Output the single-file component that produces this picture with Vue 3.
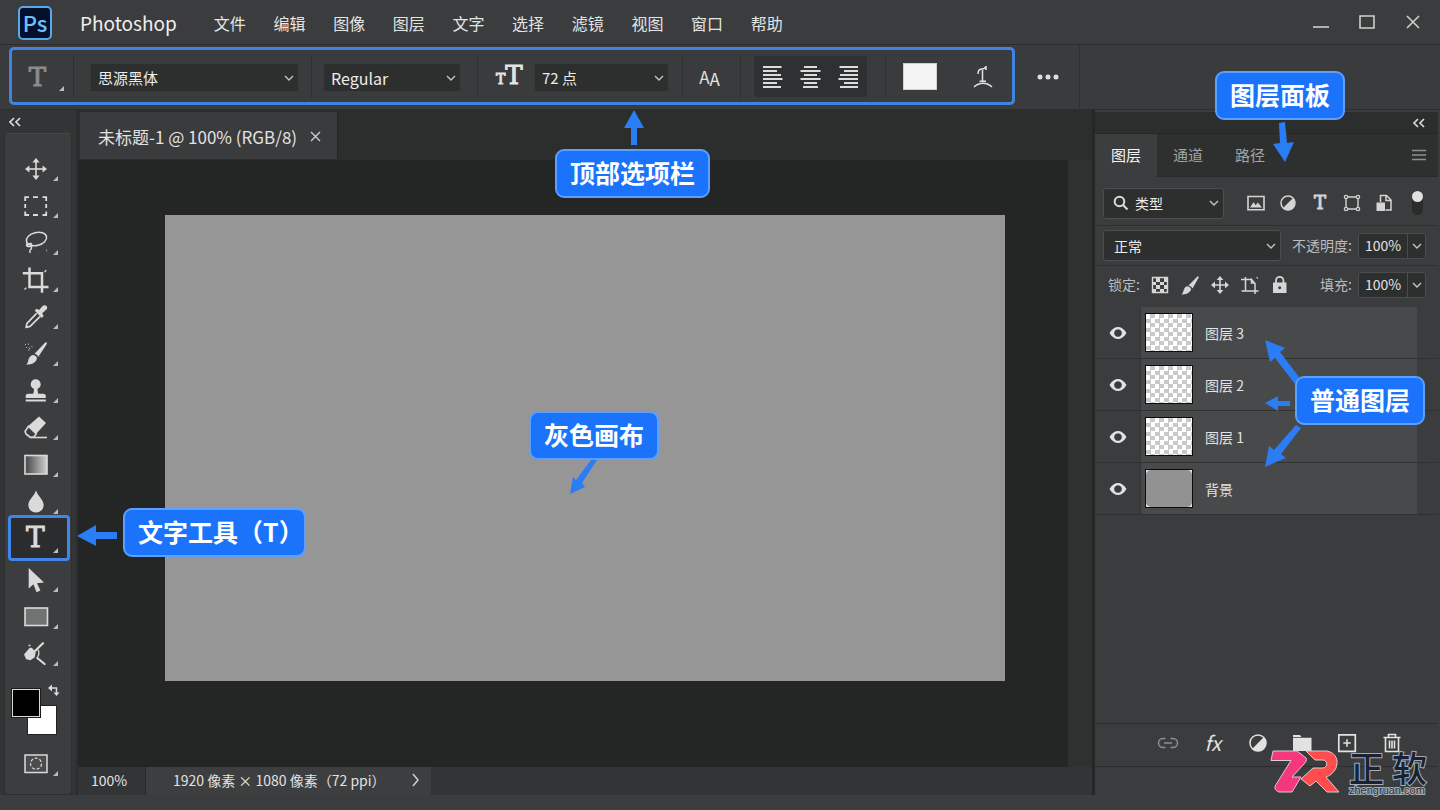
<script setup>
import { ref } from 'vue'

const menus = ['文件', '编辑', '图像', '图层', '文字', '选择', '滤镜', '视图', '窗口', '帮助']

const tools = [
  { id: 'move', label: '移动工具', body: '<g fill="currentColor"><path d="M13.2 5h1.6v18h-1.6z"/><path d="M5 13.2h18v1.6H5z"/><path d="M14 3l3.6 4.4h-7.2zM14 25l3.6-4.4h-7.2zM3 14l4.4-3.6v7.2zM25 14l-4.4-3.6v7.2z"/></g>' },
  { id: 'marquee', label: '矩形选框工具', body: '<path d="M3.2 9V5.2H7M11 5.2h5M20.500 5.200h3.700V9M24.200 12v4M24.200 19.500v3.500H20.500M16 23h-5M7 23H3.200V19.500M3.200 16v-4" fill="none" stroke="currentColor" stroke-width="1.800"/>' },
  { id: 'lasso', label: '套索工具', body: '<g fill="none" stroke="currentColor" stroke-width="1.500"><ellipse cx="14.500" cy="10" rx="10.300" ry="6.500" transform="rotate(-14 14.500 10)"/><path d="M5.500 14c-1.800 1.800-1 3.600 1 3.600s4-.6 3.200-2.400-3.700 0-4.700 1.600M9.500 17.500c.5 2-.7 3-1.300 3.500-1.500 1.300.5 1.500-.2 3"/></g><path d="M24.200 20.500h.9v2h-.9z" fill="currentColor" opacity=".7"/>' },
  { id: 'crop', label: '裁剪工具', body: '<path d="M7.500 1.500V21h19M.8 7.300H20v19.400" fill="none" stroke="currentColor" stroke-width="2.500"/><path d="M22.500 6l1.800-1.800M2.500 23.500L4.300 21.700" stroke="currentColor" stroke-width="1.300"/>' },
  { id: 'eyedropper', label: '吸管工具', body: '<path d="M14.600 10.400L5 20.300l-.9 4.100 4-1 9.800-9.800" fill="none" stroke="currentColor" stroke-width="1.700" stroke-linejoin="round"/><path d="M12.700 7.600l2-1.800 2.400 1.300 3.500-4c1.300-1.300 2.900-1.100 3.900-.2s1 2.500-.3 3.800L20.200 10.200l1.400 2.800-2 2z" fill="currentColor"/>' },
  { id: 'brush', label: '画笔工具', body: '<g fill="currentColor"><path d="M12.600 13.700L22.500 3.200c1-.9 1.800-1 2.200-.7s.3 1.100-.4 2.200L16.200 16.900c-.5-1.600-1.800-2.900-3.600-3.200z"/><path d="M11.400 14.900c2 .2 3.600 1.800 3.500 3.500-.5 3.600-4.800 6.300-10.700 6.200 2.200-1.700 1.700-3.500 2.400-5.600.8-2.400 2.700-4 4.800-4.100z"/></g><path d="M3 4.500h1M4 7l1 1M6.500 3.500v1.200M7 7.500l1 1.500M9.500 6l.8 1.200M6 10h1.500" stroke="currentColor" opacity=".75"/>' },
  { id: 'stamp', label: '仿制图章工具', body: '<g fill="currentColor"><circle cx="13.700" cy="7.300" r="5"/><path d="M11.800 11h3.900c-.3 2.200 0 4.200.6 5.700h5.200c1.300 0 2.300 1 2.300 2.200v2H3.700v-2c0-1.200 1-2.200 2.300-2.200h5.200c.6-1.500.9-3.500.6-5.700zM3.700 22.500h20.100v2H3.700z"/></g>' },
  { id: 'eraser', label: '橡皮擦工具', body: '<path d="M17 2.500l7 6.500-10 11-8.300-7.500z" fill="currentColor"/><path d="M6.500 12.200L3 17.500l1 2.500 4.500 3.500 3.200-.5 2.600-3z" fill="none" stroke="currentColor" stroke-width="1.600" stroke-linejoin="round"/><path d="M8.500 23.500h16.500" stroke="currentColor" stroke-width="1.600"/>' },
  { id: 'gradient', label: '渐变工具', body: '<defs><linearGradient id="fade"><stop offset="0" stop-color="#444"/><stop offset="1" stop-color="#d0d0d0"/></linearGradient></defs><rect x="3" y="4.500" width="22" height="18.500" fill="url(#fade)" stroke="currentColor" stroke-width="1.600"/>' },
  { id: 'blur', label: '模糊工具', body: '<path d="M14 2.500c1.500 5 7.700 9.500 7.700 14.600A7.600 7.600 0 0 1 14 24.500a7.600 7.600 0 0 1-7.700-7.400C6.300 12 12.500 7.500 14 2.500z" fill="currentColor"/>' },
  { id: 'type', label: '文字工具', active: true, glyph: 'T' },
  { id: 'select', label: '路径选择工具', body: '<path d="M6.700 2v20.500l4.800-4.200 3 7.900 3.900-1.600-3.400-7.400 7-.7z" fill="currentColor"/>' },
  { id: 'shape', label: '矩形工具', body: '<rect x="3" y="5" width="22.500" height="17.500" fill="#717272" stroke="currentColor" stroke-width="1.600"/>' },
  { id: 'pen', label: '钢笔工具', body: '<path d="M7.500 8c2-.5 3 .3 3.800 1.500l2.400 3.300-1 4.500-4.300 3-4.200-1L2 14.500z" fill="currentColor"/><path d="M12.500 11.500L21 3.200M15.300 18l7.300 6" stroke="currentColor" stroke-width="2.200" stroke-linecap="round" fill="none"/><path d="M15.800 9.500c1.600 2.300 1.600 4.800-.2 7.500M6.500 5.500h2" stroke="currentColor" stroke-width="1.300" fill="none"/>' },
]

const aligns = [
  { label: '左对齐文本', d: 'M1 1h18.500M1 5h14M1 9h18M1 13h19.500M1 17h14M1 21h18' },
  { label: '居中对齐文本', d: 'M4 1h13M.5 5h20M4 9h13M.5 13h20M4 17h13M3 21h15' },
  { label: '右对齐文本', d: 'M1.500 1H20M6 5h14M2 9h18M.5 13H20M6 17h14M2 21h18' },
]

const lockIcons = [
  { label: '锁定透明像素', body: '<path d="M2.500 2.500h15v15h-15z" fill="none" stroke="currentColor" stroke-width="1.400"/><path d="M6 3h4v4H6zM14 3h3v4h-3zM3 7h3v3H3zM10 7h4v3h-4zM6 10h4v4H6zM14 10h3v4h-3zM3 14h3v3H3zM10 14h4v3h-4z" fill="currentColor"/>' },
  { label: '锁定图像像素', body: '<path d="M8.500 10.500L17.700 1.200l1.300.9-6.500 11.300c-.8-1.500-2.400-2.400-4-2.900zM7.500 11.300c1.800.4 3.300 1.500 3.600 3-1 3.600-4.900 5.400-9.600 5.100 1.800-1.600 1.600-3 2.500-5.100.7-1.800 1.900-2.900 3.500-3z" fill="currentColor"/>' },
  { label: '锁定位置', body: '<path d="M10 3v14M3 10h14" stroke="currentColor" stroke-width="1.600"/><path d="M10 1l3.400 4H6.600zM10 19l3.400-4H6.600zM1 10l4-3.400v6.800zM19 10l-4-3.400v6.800z" fill="currentColor"/>' },
  { label: '防止自动嵌套', body: '<path d="M5.500 2v14H18.500M1 4.500h11M15 19V8.500L11.500 4.500V8H15M1.500 16H5" fill="none" stroke="currentColor" stroke-width="1.500"/><path d="M16 2.500h1.500V4" fill="none" stroke="currentColor" opacity=".7"/>' },
  { label: '锁定全部', body: '<path d="M6 9V5.500a3.700 3.700 0 0 1 7.400 0V9" fill="none" stroke="currentColor" stroke-width="1.800"/><path fill-rule="evenodd" d="M3 7.500h13.500V18H3zM9.700 11.300a1.500 1.500 0 1 0 .01 0z" fill="currentColor"/>' },
]

const filterIcons = [
  { label: '像素图层', body: '<path d="M2 3.500h16v13.300H2z" fill="none" stroke="currentColor" stroke-width="1.600"/><path d="M4 14.500l3.500-5.300 2.300 3 2-2.700 4.200 5z" fill="currentColor"/>' },
  { label: '调整图层', body: '<circle cx="10" cy="10" r="7" fill="none" stroke="currentColor" stroke-width="1.500"/><path d="M15 5a7 7 0 0 1-10 10z" fill="currentColor"/>' },
  { label: '文字图层', glyph: 'T' },
  { label: '形状图层', body: '<path d="M4 4h12v12H4z" fill="none" stroke="currentColor" stroke-width="1.400"/><g fill="#3c3d3e" stroke="currentColor" stroke-width="1.200"><circle cx="4" cy="4" r="1.700"/><circle cx="16" cy="4" r="1.700"/><circle cx="4" cy="16" r="1.700"/><circle cx="16" cy="16" r="1.700"/></g>' },
  { label: '智能对象', body: '<path d="M6.500 9V2.500h6L17 7v10h-5.500M12 2.500V7.500h5" fill="none" stroke="currentColor" stroke-width="1.500"/><path d="M2.500 9.500h8.500v8.500H2.500z" fill="currentColor"/>' },
]

const footIcons = [
  { label: '链接图层', dim: true, body: '<path d="M9.500 7.500H7a4.500 4.500 0 0 0 0 9h2.500M14.500 7.500H17a4.500 4.500 0 0 1 0 9h-2.500M8 12h8" fill="none" stroke="currentColor" stroke-width="1.500"/>' },
  { label: '图层样式', fx: true },
  { label: '新建调整图层', body: '<circle cx="12" cy="12" r="8" fill="none" stroke="currentColor" stroke-width="1.500"/><path d="M17.700 6.300a8 8 0 0 1-11.400 11.400z" fill="currentColor"/>' },
  { label: '新建组', body: '<path d="M3 4h7l1.500 2H3zM3 6.800h18.500V20H3z" fill="currentColor"/>' },
  { label: '新建图层', body: '<path d="M3.800 3.800h16.500v16.500H3.800z" fill="none" stroke="currentColor" stroke-width="1.700"/><path d="M12 8.300v7.500M8.300 12h7.500" stroke="currentColor" stroke-width="1.500"/>' },
  { label: '删除图层', body: '<path d="M3.500 6.500h17M8.500 6V3.500h7V6M5.500 6.500V20.500h13V6.500M9.500 9.500v8M12 9.500v8M14.500 9.500v8" fill="none" stroke="currentColor" stroke-width="1.600"/>' },
]

const layers = ref([
  { name: '图层 3' },
  { name: '图层 2' },
  { name: '图层 1' },
  { name: '背景', background: true },
])

const opacity = ref('100%')
const fill = ref('100%')
const filterOff = ref(false)
</script>

<template>
  <div class="app">
    <header class="titlebar">
      <span class="logo">Ps</span>
      <span class="brand">Photoshop</span>
      <nav class="menus">
        <a v-for="m in menus" :key="m" href="#">{{ m }}</a>
      </nav>
      <div class="window-buttons">
        <button aria-label="最小化"><svg width="16" height="16"><path d="M0 13h16" /></svg></button>
        <button aria-label="最大化"><svg width="16" height="16"><path d="M1 2h14v12H1z" /></svg></button>
        <button aria-label="关闭"><svg width="16" height="16"><path d="M2 2l12 12M14 2L2 14" /></svg></button>
      </div>
    </header>

    <div class="options">
      <div class="options-frame">
        <div class="group first">
          <button class="preset slab" aria-label="工具预设">T</button>
        </div>
        <div class="group family">
          <span class="picker">
            <select aria-label="字体"><option>思源黑体</option></select>
            <svg class="chev" width="10" height="6"><path d="M1 1l4 4 4-4" /></svg>
          </span>
        </div>
        <div class="group weight">
          <span class="picker">
            <select aria-label="字形"><option>Regular</option></select>
            <svg class="chev" width="10" height="6"><path d="M1 1l4 4 4-4" /></svg>
          </span>
        </div>
        <div class="group size">
          <label class="size-label slab" for="font-size" aria-label="字号"><small>T</small>T</label>
          <span class="picker">
            <select id="font-size"><option>72 点</option></select>
            <svg class="chev" width="10" height="6"><path d="M1 1l4 4 4-4" /></svg>
          </span>
        </div>
        <div class="group alias">
          <button class="antialias" aria-label="消除锯齿"><span>A</span><span class="low">A</span></button>
        </div>
        <div class="group paragraph">
          <div class="aligns">
            <button v-for="a in aligns" :key="a.label" :aria-label="a.label">
              <svg width="21" height="22"><path :d="a.d" /></svg>
            </button>
          </div>
        </div>
        <div class="group colour">
          <button class="text-colour" aria-label="文本颜色"></button>
          <button class="warp" aria-label="变形文字">
            <svg width="20" height="24" fill="none" stroke="currentColor">
              <path d="M1 22c5-5 13-5 18 0" stroke-width="1.500" />
              <path d="M5 9c0-4 2-5 4-5s3-.5 4-2.500M13 1v4M9.500 5v11M6.500 16.300h6.500" stroke-width="1.500" />
            </svg>
          </button>
        </div>
      </div>
      <button class="more" aria-label="更多选项"><svg width="22" height="6"><circle cx="3" cy="3" r="2.500" /><circle cx="11" cy="3" r="2.500" /><circle cx="19" cy="3" r="2.500" /></svg></button>
    </div>

    <div class="main">
      <aside class="toolbox">
        <button class="collapse" aria-label="折叠工具栏"><svg width="12" height="10"><path d="M5 1L1 5l4 4M11 1L7 5l4 4" /></svg></button>
        <div class="tools">
          <button v-for="t in tools" :key="t.id" class="tool" :class="{ active: t.active }" :aria-label="t.label">
            <span v-if="t.glyph" class="glyph slab">{{ t.glyph }}</span>
            <svg v-else width="28" height="28" viewBox="0 0 28 28" v-html="t.body"></svg>
          </button>
          <div class="swatches">
            <button class="back" aria-label="背景色"></button>
            <button class="front" aria-label="前景色"></button>
            <button class="swap" aria-label="切换颜色"><svg width="12" height="12"><path d="M2 4h6.500v6" fill="none" stroke="currentColor" stroke-width="1.500" /><path d="M0 4l4-3.500v7zM8.500 12L5.500 8.500h6z" fill="currentColor" /></svg></button>
          </div>
          <button class="tool mask" aria-label="快速蒙版">
            <svg width="28" height="28" viewBox="0 0 28 28"><rect x="3" y="5" width="22" height="17.500" fill="#4b4c4d" stroke="currentColor" stroke-width="1.500" /><circle cx="14" cy="13.700" r="5.500" fill="none" stroke="currentColor" stroke-width="1.200" stroke-dasharray="3 1.800" /></svg>
          </button>
        </div>
      </aside>

      <main class="workspace">
        <div class="tabbar">
          <div class="doc-tab">
            <span>未标题-1 @ 100% (RGB/8)</span>
            <button aria-label="关闭文档"><svg width="11" height="11"><path d="M1 1l9 9M10 1L1 10" /></svg></button>
          </div>
        </div>
        <div class="viewport">
          <div class="stage">
            <div class="canvas">
              <div class="callout on-canvas">
                <svg class="arrow" width="1" height="1"><path d="M62 49h6L53 72l3 4-15 7 3-17 3 3z" /></svg>
                <strong>灰色画布</strong>
              </div>
            </div>
          </div>
          <div class="scroll"></div>
        </div>
        <footer class="status">
          <span class="zoom">100%</span>
          <span class="info">1920 像素 × 1080 像素（72 ppi）<button aria-label="更多信息"><svg width="8" height="14"><path d="M1 1l5 6-5 6" /></svg></button></span>
        </footer>
      </main>

      <aside class="panel">
        <div class="panel-top">
          <button aria-label="折叠面板"><svg width="14" height="10"><path d="M6 1L2 5l4 4M12 1L8 5l4 4" /></svg></button>
        </div>
        <div class="panel-tabs">
          <button class="current">图层</button>
          <button>通道</button>
          <button>路径</button>
          <button class="panel-menu" aria-label="面板菜单"><svg width="14" height="12"><path d="M0 1.500h14M0 6h14M0 10.500h14" /></svg></button>
        </div>
        <div class="row filter">
          <span class="picker boxed">
            <svg class="search" width="16" height="16"><circle cx="6.500" cy="6.500" r="4.800" /><path d="M10 10l4.500 4.500" /></svg>
            <select aria-label="筛选类型"><option>类型</option></select>
            <svg class="chev" width="10" height="6"><path d="M1 1l4 4 4-4" /></svg>
          </span>
          <div class="filter-icons">
            <button v-for="f in filterIcons" :key="f.label" :aria-label="f.label">
              <span v-if="f.glyph" class="glyph slab">{{ f.glyph }}</span>
              <svg v-else width="20" height="20" viewBox="0 0 20 20" v-html="f.body"></svg>
            </button>
          </div>
          <input v-model="filterOff" class="switch" type="checkbox" aria-label="打开或关闭图层过滤" />
        </div>
        <div class="row blend">
          <span class="picker boxed">
            <select aria-label="混合模式"><option>正常</option></select>
            <svg class="chev" width="10" height="6"><path d="M1 1l4 4 4-4" /></svg>
          </span>
          <label for="opacity">不透明度:</label>
          <span class="amount">
            <input id="opacity" v-model="opacity" type="text" />
            <button aria-label="调整不透明度"><svg class="mark" width="10" height="6"><path d="M1 1l4 4 4-4" /></svg></button>
          </span>
        </div>
        <div class="row lock">
          <span class="lock-title">锁定:</span>
          <div class="lock-icons">
            <button v-for="l in lockIcons" :key="l.label" :aria-label="l.label">
              <svg width="20" height="20" viewBox="0 0 20 20" v-html="l.body"></svg>
            </button>
          </div>
          <label for="fill">填充:</label>
          <span class="amount">
            <input id="fill" v-model="fill" type="text" />
            <button aria-label="调整填充"><svg class="mark" width="10" height="6"><path d="M1 1l4 4 4-4" /></svg></button>
          </span>
        </div>
        <ul class="layers">
          <li v-for="l in layers" :key="l.name">
            <button class="eye" :aria-label="'显示或隐藏 ' + l.name">
              <svg width="18" height="14"><path fill-rule="evenodd" d="M0.500 7C3 2.800 6 1 9 1s6 1.800 8.500 6C15 11.200 12 13 9 13S3 11.200.5 7zM9 3.200a3.800 3.800 0 1 0 .01 0z" /></svg>
            </button>
            <div class="layer-body">
              <span class="thumb" :class="{ solid: l.background }"></span>
              <span>{{ l.name }}</span>
            </div>
          </li>
        </ul>
        <div class="panel-foot">
          <button v-for="f in footIcons" :key="f.label" :class="{ dim: f.dim }" :aria-label="f.label">
            <em v-if="f.fx">fx</em>
            <svg v-else width="24" height="24" viewBox="0 0 24 24" v-html="f.body"></svg>
          </button>
        </div>
        <div class="panel-base"></div>
      </aside>
    </div>

    <div class="callout on-options">
      <svg class="arrow" width="1" height="1"><path d="M79-39l10 18h-7v17h-6v-17h-7z" /></svg>
      <strong>顶部选项栏</strong>
    </div>
    <div class="callout on-panel">
      <svg class="arrow" width="1" height="1"><path d="M64 52l6-1 2 21 7-1-9 20-12-18 7-1z" /></svg>
      <strong>图层面板</strong>
    </div>
    <div class="callout on-type">
      <svg class="arrow" width="1" height="1"><path d="M-46 28l19-11v7h21v7h-21v7z" /></svg>
      <strong>文字工具（T<span class="close">）</span></strong>
    </div>
    <div class="callout on-layers">
      <svg class="arrow" width="1" height="1">
        <path d="M-30-36l20 8-5 4L4 1l-4 7-20-26-5 4z" />
        <path d="M-30 27l13-7v5h12v5h-12v5z" />
        <path d="M-30 91l4-21 5 4L1 49l5 3-20 26 5 4z" />
      </svg>
      <strong>普通图层</strong>
    </div>

    <div class="watermark">
      <svg width="70" height="44" viewBox="0 0 70 44" stroke="#d9cdd2" stroke-width="1" stroke-linejoin="round">
        <path d="M3 1h24l9 7c1 2 0 4-2 6L22 27h9l-9 15H9c-5-2-5-5-2-9l14-22.500H1z" fill="#f5377e" />
        <path d="M36 1h21c9 2 12 9 9 17-3 6-7 8-10 9l13 15H57L46 31l-6 5-9-7 12-11h10c5-1 5-7 0-8h-8z" fill="#ff4c4c" />
      </svg>
      <div class="wordmark">
        <div class="hanzi"><span>正</span><span>软</span></div>
        <span class="site">zhengruan.com</span>
      </div>
    </div>
  </div>
</template>

<style>
body {
  background: #3b3c3d;
}
</style>

<style scoped>
* {
  box-sizing: border-box;
}

.app {
  position: relative;
  display: flex;
  flex-direction: column;
  min-height: 100vh;
  padding-bottom: 15px;
  overflow: hidden;
  background: #3b3c3d;
  color: #e2e2e2;
  font: 14px/20px "Noto Sans CJK SC", "Noto Sans", sans-serif;
}

button,
select,
input {
  margin: 0;
  padding: 0;
  border: 0;
  background: none;
  color: inherit;
  font: inherit;
}

button {
  display: grid;
  place-items: center;
}

svg {
  display: block;
}

.slab {
  font-family: "DejaVu Serif", serif;
}

/* title bar */
.titlebar {
  display: flex;
  align-items: center;
  height: 45px;
  padding: 2px 19px 0 18px;
  border-bottom: 1px solid #2a2b2b;
}

.logo {
  width: 34px;
  height: 34px;
  border: 2px solid #55a9ec;
  border-radius: 5px;
  background: #041029;
  color: #6cc0ff;
  font-size: 22px;
  font-weight: 500;
  line-height: 28px;
  text-align: center;
}

.brand {
  margin-left: 28px;
  color: #efefef;
  font-size: 19px;
}

.menus {
  display: flex;
  justify-content: space-between;
  width: 569px;
  margin-left: 37px;
}

.menus a {
  color: #e4e4e4;
  font-size: 16px;
  text-decoration: none;
}

.window-buttons {
  display: flex;
  gap: 30px;
  margin-left: auto;
  padding-bottom: 2px;
}

.window-buttons path {
  fill: none;
  stroke: #cfcfcf;
  stroke-width: 1.6;
}

/* options bar */
.options {
  display: flex;
  align-items: center;
  height: 65px;
  padding-left: 9px;
  border-bottom: 1px solid #2c2d2d;
  background: #3a3b3c;
}

.options-frame {
  display: flex;
  align-items: center;
  height: 58px;
  margin-bottom: 3px;
  padding-top: 2px;
  border: 3px solid #3f83e2;
  border-radius: 5px;
}

.group {
  display: flex;
  align-items: center;
  height: 42px;
  border-left: 1px solid #2f3030;
}

.first {
  justify-content: center;
  width: 61px;
  border-left: 0;
}

.preset {
  position: relative;
  width: 42px;
  height: 28px;
  padding-right: 10px;
  color: #8b8c8c;
  font-size: 26px;
  -webkit-text-stroke: 1px;
}

.preset::after,
.tool::after {
  content: "";
  position: absolute;
  right: 2px;
  bottom: 2px;
  border-left: 5px solid transparent;
  border-bottom: 5px solid #bdbdbd;
}

.preset::after {
  right: 0;
  bottom: 0;
}

.family {
  padding: 0 12px 0 16px;
}

.family .picker {
  width: 209px;
}

.weight {
  padding: 0 16px 0 11px;
}

.weight .picker {
  width: 138px;
}

.size {
  padding: 0 13px 0 18px;
}

.size .picker {
  width: 135px;
}

.size-label {
  display: flex;
  align-items: baseline;
  width: 38px;
  font-size: 26px;
  -webkit-text-stroke: 1px;
}

.size-label small {
  font-size: 14px;
}

.picker {
  position: relative;
  display: flex;
  align-items: center;
  height: 29px;
  border: 1px solid #383939;
  border-radius: 2px;
  background: #2d2e2e;
}

.group .picker {
  margin-top: 2px;
}

.picker select {
  flex: 1;
  width: 100%;
  height: 100%;
  padding: 0 24px 0 7px;
  appearance: none;
  color: #ececec;
  font-size: 16px;
  line-height: 26px;
}

.family select,
.size select {
  font-size: 15px;
}

.chev {
  position: absolute;
  right: 4px;
  pointer-events: none;
}

.chev path,
.mark path {
  fill: none;
  stroke: #c4c4c4;
  stroke-width: 1.4;
}

.alias {
  justify-content: center;
  width: 58px;
  padding-right: 4px;
}

.antialias {
  display: flex;
  font-size: 17px;
}

.antialias .low {
  padding-top: 5px;
}

.paragraph {
  padding: 0 18px 0 13px;
}

.aligns {
  display: flex;
  justify-content: space-around;
  width: 113px;
  height: 41px;
  border-radius: 3px;
  background: #2f3031;
}

.aligns path {
  stroke: #dcdcdc;
  stroke-width: 1.8;
}

.colour {
  gap: 36px;
  padding: 0 19px 0 17px;
}

.text-colour {
  width: 34px;
  height: 27px;
  border: 1px solid #d0d0d0;
  background: #f3f3f3;
}

.more {
  height: 62px;
  padding: 0 20px 0 22px;
  border-right: 1px solid #2d2e2e;
}

.more circle {
  fill: #dedede;
}

/* main area */
.main {
  display: flex;
  flex: 1;
  min-height: 0;
}

.toolbox {
  display: flex;
  flex-direction: column;
  width: 78px;
  padding-left: 4px;
  border-right: 2px solid #2b2c2c;
  background: #333435;
}

.collapse {
  width: 22px;
  height: 23px;
}

.collapse path,
.panel-top path {
  fill: none;
  stroke: #d8d8d8;
  stroke-width: 1.7;
}

.tools {
  display: flex;
  flex: 1;
  flex-direction: column;
  width: 68px;
  padding: 16px 2px 0 4px;
  border: 1px solid #2e2f2f;
  border-top-color: #464748;
  border-radius: 4px;
  background: #3c3d3e;
  color: #dadada;
}

.tool {
  position: relative;
  justify-content: start;
  width: 62px;
  height: 37px;
  padding-left: 13px;
}

.tool::after {
  right: 13px;
  bottom: 6px;
}

.tool.active {
  height: 46px;
  margin: -5px 0 0 -1px;
  padding-left: 15px;
  border: 3px solid #3f86e8;
  border-radius: 4px;
  background: #2b2c2d;
}

.tool.active::after {
  right: 9px;
  bottom: 5px;
}

.tool .glyph {
  font-size: 28px;
  line-height: 36px;
  -webkit-text-stroke: 1px;
}

.swatches {
  position: relative;
  height: 52px;
  margin-top: 12px;
}

.swatches button {
  position: absolute;
}

.front {
  top: 5px;
  left: 3px;
  width: 28px;
  height: 28px;
  border: 1px solid #d9d9d9;
  outline: 1px solid #1c1c1c;
  background: #000;
}

.swatches .back {
  top: 21px;
  left: 18px;
  width: 30px;
  height: 30px;
  border: 1px solid #222;
  background: #fff;
}

.swap {
  top: 0;
  left: 39px;
}

.mask {
  margin-top: 9px;
}

/* document */
.workspace {
  display: flex;
  flex: 1;
  flex-direction: column;
  min-width: 0;
  background: #2b2c2c;
}

.tabbar {
  display: flex;
  height: 50px;
  padding: 2px 0 0 2px;
  border-bottom: 1px solid #2b2c2c;
  background: #2c2d2d;
}

.doc-tab {
  display: flex;
  align-items: center;
  gap: 13px;
  padding: 2px 16px 0 18px;
  border-right: 1px solid #252626;
  background: #3a3b3c;
  font-size: 17px;
}

.doc-tab path {
  fill: none;
  stroke: #cdcdcd;
  stroke-width: 1.4;
}

.viewport {
  display: flex;
  flex: 1;
}

.stage {
  display: flex;
  flex: 1;
  padding: 55px 63px 86px 87px;
  background: #242525;
}

.canvas {
  position: relative;
  flex: 1;
  background: #969696;
}

.scroll {
  width: 24px;
  background: #2f3030;
}

.status {
  display: flex;
  height: 28px;
  background: #333435;
  line-height: 26px;
}

.zoom {
  width: 68px;
  padding-left: 13px;
  border-right: 1px solid #2a2b2b;
}

.info {
  display: flex;
  align-items: center;
  gap: 26px;
  padding: 0 11px 2px 27px;
  background: #3d3e3f;
}

.info path {
  fill: none;
  stroke: #cfcfcf;
  stroke-width: 1.5;
}

/* layers panel */
.panel {
  display: flex;
  flex-direction: column;
  width: 348px;
  padding: 2px 2px 0 0;
  border-left: 3px solid #252626;
  background: #3b3c3d;
}

.panel-top {
  display: flex;
  justify-content: flex-end;
  height: 21px;
  padding-right: 12px;
  background: #2c2d2d;
}

.panel-tabs {
  display: flex;
  height: 44px;
  border-top: 1px solid #252626;
  border-bottom: 1px solid #292a2a;
  background: #2e2f2f;
  color: #a3a3a3;
}

.panel-tabs button {
  width: 62px;
  font-size: 15px;
}

.panel-tabs .current {
  height: 44px;
  padding-bottom: 2px;
  background: #3c3d3e;
  color: #f4f4f4;
}

.panel-tabs .panel-menu {
  width: 38px;
  margin-left: auto;
}

.panel-menu path {
  stroke: #8f8f8f;
  stroke-width: 1.5;
}

.row {
  display: flex;
  align-items: center;
  height: 40px;
  padding: 0 12px 0 8px;
  border-bottom: 1px solid #2f3030;
}

.row.filter {
  height: 49px;
  padding: 4px 15px 0 8px;
}

.row.lock {
  height: 41px;
  padding: 0 12px 4px 13px;
  border-bottom: 0;
}

.boxed {
  height: 31px;
  border-color: #4d4e4f;
  border-radius: 3px;
}

.boxed select {
  padding-left: 10px;
  font-size: 14px;
}

.filter .boxed {
  width: 121px;
  padding-left: 9px;
}

.filter .boxed select {
  padding-left: 6px;
}

.search {
  flex: none;
  fill: none;
  stroke: #dcdcdc;
  stroke-width: 2;
}

.filter-icons {
  display: flex;
  gap: 12px;
  margin-left: 22px;
  color: #d4d4d4;
}

.filter-icons button {
  width: 20px;
  height: 20px;
}

.filter-icons .glyph {
  font-size: 18px;
  -webkit-text-stroke: 1px;
}

.switch {
  width: 11px;
  height: 24px;
  margin-left: auto;
  border-radius: 6px;
  appearance: none;
  background: #2a2b2b;
}

.switch::before {
  content: "";
  display: block;
  width: 11px;
  height: 11px;
  border-radius: 50%;
  background: #e0e0e0;
}

.blend .boxed {
  flex: 1;
  margin-right: 11px;
}

.row label,
.lock-title {
  padding-bottom: 2px;
  color: #bdbdbd;
}

.amount {
  display: flex;
  width: 68px;
  height: 26px;
  margin-left: 6px;
  border: 1px solid #4b4c4d;
  border-radius: 2px;
  background: #2d2e2e;
}

.amount input {
  width: 48px;
  padding-bottom: 2px;
  text-align: center;
}

.amount button {
  flex: 1;
  border-left: 1px solid #4b4c4d;
}

.lock-icons {
  display: flex;
  gap: 10px;
  margin: 0 auto 0 10px;
  color: #d6d6d6;
}

.layers {
  flex: 1;
  margin: 0;
  padding: 0;
  list-style: none;
}

.layers li {
  display: flex;
  height: 52px;
  border-bottom: 1px solid #303131;
}

.eye {
  width: 45px;
}

.eye path {
  fill: #e2e2e2;
}

.layer-body {
  display: flex;
  flex: 1;
  align-items: center;
  gap: 12px;
  margin-right: 21px;
  padding-left: 4px;
  border-left: 1px solid #343536;
  background: #48494a;
}

.thumb {
  width: 48px;
  height: 39px;
  border: 1px solid #0c0c0c;
  background: repeating-conic-gradient(#c9c9c9 0 25%, #fff 0 50%) 0 0 / 9px 9px;
}

.thumb.solid {
  background: #e6e6e6;
}

.thumb.solid::before {
  content: "";
  display: block;
  height: 100%;
  border-radius: 5px;
  background: #929292;
}

.panel-foot {
  display: flex;
  justify-content: space-between;
  height: 44px;
  padding: 0 34px 4px 61px;
  border-top: 1px solid #2c2d2d;
  border-bottom: 1px solid #2c2d2d;
}

.panel-foot button {
  width: 24px;
}

.panel-foot .dim {
  color: #8f8f8f;
}

.panel-foot em {
  font-size: 20px;
}

.panel-base {
  height: 28px;
}

/* callouts */
.callout {
  position: absolute;
}

.callout strong {
  position: relative;
  display: block;
  padding: 0 13px 2px;
  border: 2px solid #5b9fff;
  border-radius: 9px;
  background: #1c73fb;
  color: #fff;
  font-size: 25px;
  font-weight: 700;
  line-height: 43px;
  white-space: nowrap;
}

.close {
  font-feature-settings: "halt";
}

.arrow {
  position: absolute;
  top: 0;
  left: 0;
  overflow: visible;
  fill: #2b7df5;
}

.on-options {
  top: 149px;
  left: 555px;
}

.on-panel {
  top: 71px;
  right: 95px;
}

.on-type {
  top: 508px;
  left: 123px;
}

.on-layers {
  top: 376px;
  right: 15px;
}

.on-canvas {
  top: 42%;
  left: calc(50% - 56px);
}

/* watermark */
.watermark {
  position: absolute;
  right: 13px;
  bottom: 13px;
  display: flex;
  gap: 9px;
}

.hanzi {
  display: flex;
  justify-content: space-between;
  width: 78px;
  color: #182233;
  font-size: 35px;
  font-weight: 500;
  line-height: 34px;
  paint-order: stroke fill;
  -webkit-text-stroke: 2px #a9adb3;
}

.site {
  display: block;
  color: #2c2f33;
  font: 11px/13px "Liberation Sans", Arial, sans-serif;
  paint-order: stroke fill;
  -webkit-text-stroke: 2px #a9adb3;
}
</style>
